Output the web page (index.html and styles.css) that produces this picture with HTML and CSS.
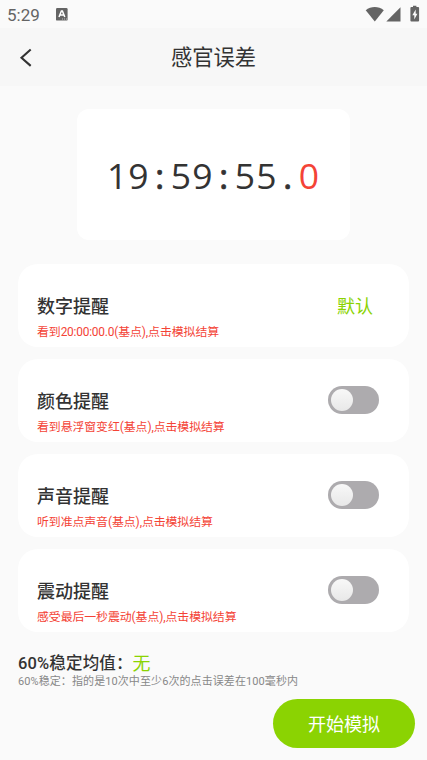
FILE: index.html
```html
<!DOCTYPE html>
<html lang="zh-CN">
<head>
<meta charset="utf-8">
<meta name="viewport" content="width=device-width, initial-scale=1">
<title>感官误差</title>
<link rel="stylesheet" href="styles.css">
</head>
<body>
<div class="status">
  <span class="time">5:29</span>
  <svg class="app-icon" width="12" height="13" viewBox="0 0 12 13"><rect width="11.6" height="12.6" rx="1.2" fill="#646464"/><path d="M3 9 5.4 3h1L8.8 9M4 7h3.8" fill="none" stroke="#fff" stroke-width="1.5"/><path d="M6 11h1M8 11h1M10 11h1" stroke="#ddd" stroke-width=".8"/></svg>
  <svg class="signals" width="56" height="18" viewBox="0 0 56 18" fill="#646464"><path d="M.7 4.2C6-.1 13.500-.1 18.800 4.200L9.800 15.400Z"/><path d="M35.500 1.200V15.400H21.300Z"/><path fill-rule="evenodd" d="M48 1v-1.300h3.400v1.300h1.700q1 0 1 1v12.400q0 1-1 1h-6.700q-1 0-1-1V2q0-1 1-1ZM50.700 3.500 47.300 9.200h2v4.300l3.100-5.800h-1.700Z"/></svg>
</div>
<header class="bar">
  <svg class="back" width="14" height="20" viewBox="0 0 14 20"><path d="M11.700 1.500 2.500 9.700l9.200 8.200" fill="none" stroke="#333" stroke-width="2.100"/></svg>
  <h1>感官误差</h1>
</header>
<main>
  <div class="clock"><span>19</span><span class="sep">:</span><span>59</span><span class="sep">:</span><span>55</span><span class="sep">.</span><span class="tenth">0</span></div>
  <section class="card">
    <div><h2>数字提醒</h2><p>看到<span class="moment">20:00:00.0</span>(基点),点击模拟结算</p></div>
    <span class="default">默认</span>
  </section>
  <section class="card">
    <div><h2>颜色提醒</h2><p>看到悬浮窗变红(基点),点击模拟结算</p></div>
    <span class="switch"></span>
  </section>
  <section class="card">
    <div><h2>声音提醒</h2><p>听到准点声音(基点),点击模拟结算</p></div>
    <span class="switch"></span>
  </section>
  <section class="card">
    <div><h2>震动提醒</h2><p>感受最后一秒震动(基点),点击模拟结算</p></div>
    <span class="switch"></span>
  </section>
  <div class="average"><b>60%稳定均值：</b><span>无</span></div>
  <p class="note">60%稳定：指的是10次中至少6次的点击误差在100毫秒内</p>
  <button class="start">开始模拟</button>
</main>
</body>
</html>
```
FILE: styles.css
```css
* { box-sizing: border-box; margin: 0; padding: 0; }
body {
  height: 760px;
  overflow: hidden;
  background: #fafafa;
  color: #333;
  font-family: Roboto, "Noto Sans CJK SC", sans-serif;
}
.status { height: 28px; display: flex; align-items: flex-start; padding: 0 7px; color: #646464; }
.time { width: 49px; font-size: 17px; line-height: 20px; padding-top: 5px; }
.app-icon { margin-top: 8px; }
.signals { margin: 6px 0 0 auto; transform: translateX(1px); overflow: visible; }
.bar { height: 58px; background: #f7f7f7; display: flex; align-items: center; justify-content: center; position: relative; }
.back { position: absolute; left: 19px; top: 20px; }
.bar h1 { font-size: 21.3px; font-weight: 400; line-height: 30px; padding-top: 2px; }
main { padding: 23px 18px 0; display: flex; flex-direction: column; }
.clock {
  width: 273px; height: 131px; margin: 0 auto 24px;
  border-radius: 12px; background: #fff;
  display: flex; align-items: center; justify-content: center;
  font: 35.5px/48px "Open Sans", sans-serif;
  letter-spacing: 1.03px;
  padding-top: 1px;
}
.sep { width: 21.3px; text-align: center; -webkit-text-stroke: 0.7px #333; }
.tenth { color: #f44336; }
.card {
  height: 83px; margin-bottom: 12px; padding: 27px 30px 0 19px;
  border-radius: 20px; background: #fff;
  display: flex; justify-content: space-between; align-items: flex-start;
}
.card h2 { font-size: 18px; font-weight: 500; line-height: 28px; padding-top: 2px; }
.card p { font-size: 11.9px; line-height: 18px; margin-top: 2px; color: #f44336; white-space: nowrap; letter-spacing: -.07px; }
.moment { letter-spacing: -.22px; }
.default { font-size: 18px; line-height: 28px; padding-top: 2px; color: #8bd302; margin-right: 6px; }
.switch {
  width: 51px; height: 28px; border-radius: 14px; background: #adabae; padding: 3px;
}
.switch::before {
  content: ""; display: block; width: 22px; height: 22px; border-radius: 50%;
  background: linear-gradient(#f8f8f8, #e8e8e8);
}
.average { display: flex; align-items: center; height: 26px; margin-top: 5px; }
.average b { font-size: 16.5px; font-weight: 500; letter-spacing: .15px; margin-top: -1px; }
.average span { font-size: 18px; color: #8bd302; }
.note { font-size: 11px; line-height: 16px; color: #888; white-space: nowrap; margin-top: -1px; letter-spacing: .09px; }
.start {
  align-self: flex-end; width: 142px; height: 49px; margin: 9px -6px 0 0;
  padding-top: 2px;
  border: 0; border-radius: 25px; background: #8bd302; color: #fff;
  font: 18px/28px Roboto, "Noto Sans CJK SC", sans-serif;
}
```
